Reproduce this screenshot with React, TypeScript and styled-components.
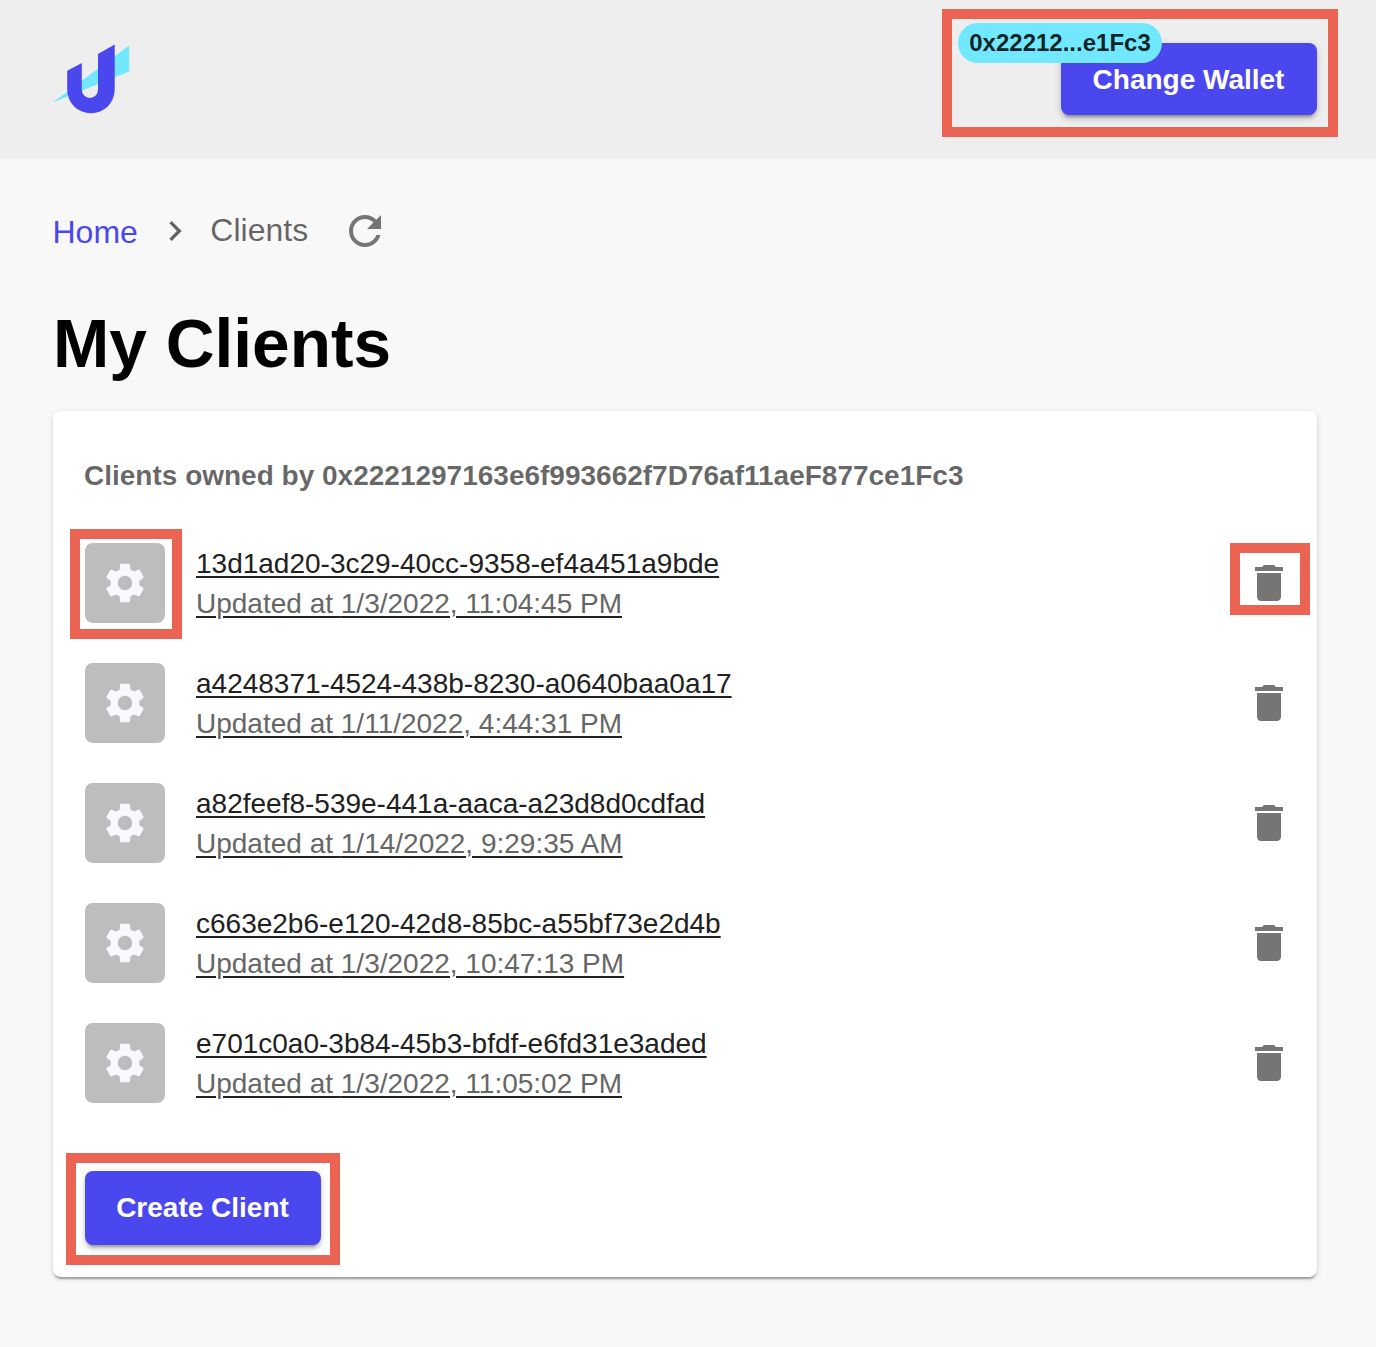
import React from 'react';
import styled, { createGlobalStyle, css } from 'styled-components';

const GlobalStyle = createGlobalStyle`
  *, *::before, *::after { box-sizing: border-box; }
  html, body { margin: 0; padding: 0; background: #f8f8f8; }
  body {
    font-family: Helvetica, "Liberation Sans", Arial, sans-serif;
    color: rgba(0, 0, 0, 0.87);
  }
`;

/* Red annotation frame drawn around a control; offsets are top/right/bottom/left overhang. */
const frame = css<{ $frame?: string }>`
  ${({ $frame }) =>
    $frame &&
    css`
      &::after {
        content: '';
        position: absolute;
        inset: ${$frame};
        border: 10px solid #eb6453;
        pointer-events: none;
      }
    `}
`;

const Page = styled.div`
  min-height: 1347px;
  background: #f8f8f8;
`;

const Header = styled.header`
  display: flex;
  align-items: center;
  justify-content: space-between;
  height: 159px;
  padding: 0 59px 1px 52px;
  background: #eeeeee;
`;

const Logo = styled.svg`
  display: block;
  width: 80px;
  height: 72px;
`;

const Button = styled.button<{
  $height: number;
  $width: number;
  $frame?: string;
  $padding?: string;
}>`
  position: relative;
  display: flex;
  align-items: center;
  justify-content: center;
  width: ${({ $width }) => $width}px;
  height: ${({ $height }) => $height}px;
  padding: ${({ $padding }) => $padding ?? '0 1px 0 0'};
  border: 0;
  border-radius: 8px;
  background: #4b47ee;
  color: #fff;
  font: bold 28px/48px "Liberation Sans", Arial, sans-serif;
  white-space: nowrap;
  box-shadow:
    0 6px 2px -4px rgba(0, 0, 0, 0.2),
    0 4px 4px 0 rgba(0, 0, 0, 0.14),
    0 2px 10px 0 rgba(0, 0, 0, 0.12);
  ${frame}
`;

const Badge = styled.span`
  position: absolute;
  top: -20px;
  right: 155px;
  display: flex;
  align-items: center;
  justify-content: center;
  width: 204px;
  height: 40px;
  border-radius: 20px;
  background: #72e8ff;
  color: rgba(0, 0, 0, 0.87);
  font-size: 24px;
  line-height: 24px;
`;

const Main = styled.main`
  padding: 48px 59px 0 53px;
`;

const Breadcrumbs = styled.nav`
  display: flex;
  align-items: center;
  height: 48px;
  margin-left: -0.5px;
  font-size: 32px;
  line-height: 48px;
`;

const HomeLink = styled.a`
  padding-top: 1px;
  color: #4b47ee;
  text-decoration: none;
`;

const Crumb = styled.span`
  padding-bottom: 2px;
  color: rgba(0, 0, 0, 0.6);
`;

const Icon = styled.svg<{ $size: number }>`
  display: block;
  flex: none;
  width: ${({ $size }) => $size}px;
  height: ${({ $size }) => $size}px;
  fill: currentColor;
`;

const Separator = styled.span`
  margin: 0 15px 0 17.5px;
  color: rgba(0, 0, 0, 0.6);
`;

const IconButton = styled.button<{ $frame?: string }>`
  position: relative;
  flex: none;
  padding: 0;
  border: 0;
  background: none;
  color: #757575;
  ${frame}
`;

const RefreshSlot = styled.div`
  display: flex;
  margin-left: 33px;
`;

const Title = styled.h1`
  margin: 49px 0 27px;
  color: #000;
  font-size: 67.6px;
  line-height: 80px;
  font-weight: bold;
`;

const Card = styled.section`
  height: 866px;
  padding: 32px;
  border-radius: 8px;
  background: #fff;
  box-shadow:
    0 4px 2px -2px rgba(0, 0, 0, 0.2),
    0 2px 2px 0 rgba(0, 0, 0, 0.14),
    0 2px 6px 0 rgba(0, 0, 0, 0.12);
`;

const Owner = styled.h2`
  margin: 0 0 0 -1px;
  height: 80px;
  color: rgba(0, 0, 0, 0.6);
  font-size: 28px;
  line-height: 66px;
  font-weight: bold;
  white-space: nowrap;
`;

const List = styled.ul`
  margin: 0 -8px 48px 0;
  padding: 0;
  list-style: none;
`;

const Row = styled.li`
  display: flex;
  align-items: center;
  height: 120px;
`;

const Avatar = styled.div<{ $frame?: string }>`
  position: relative;
  display: flex;
  align-items: center;
  justify-content: center;
  flex: none;
  width: 80px;
  height: 80px;
  border-radius: 8px;
  background: #bdbdbd;
  color: #f8f8ff;
  ${frame}
`;

const Details = styled.a`
  display: flex;
  flex-direction: column;
  align-items: flex-start;
  flex: 1;
  margin-left: 31px;
  padding-top: 2px;
  color: #212121;
  font-size: 28px;
  line-height: 40px;
`;

const Underlined = styled.span`
  text-decoration: underline;
  text-decoration-color: #212121;
  text-decoration-thickness: 2px;
  text-underline-offset: 3px;
`;

const Muted = styled(Underlined)`
  color: #666;
`;

const paths = {
  next: 'M10 6L8.59 7.41 13.17 12l-4.58 4.59L10 18l6-6z',
  refresh:
    'M17.65 6.35C16.2 4.9 14.21 4 12 4c-4.42 0-7.99 3.58-7.99 8s3.57 8 7.99 8c3.73 0 6.84-2.55 7.73-6h-2.08c-.82 2.33-3.04 4-5.65 4-3.31 0-6-2.69-6-6s2.69-6 6-6c1.66 0 3.14.69 4.22 1.78L13 11h7V4l-2.35 2.35z',
  settings:
    'M19.14 12.94c.04-.3.06-.61.06-.94 0-.32-.02-.64-.07-.94l2.03-1.58c.18-.14.23-.41.12-.61l-1.92-3.32c-.12-.22-.37-.29-.59-.22l-2.39.96c-.5-.38-1.03-.7-1.62-.94l-.36-2.54c-.04-.24-.24-.41-.48-.41h-3.84c-.24 0-.43.17-.47.41l-.36 2.54c-.59.24-1.13.57-1.62.94l-2.39-.96c-.22-.08-.47 0-.59.22L2.74 8.87c-.12.21-.08.47.12.61l2.03 1.58c-.05.3-.09.63-.09.94s.02.64.07.94l-2.03 1.58c-.18.14-.23.41-.12.61l1.92 3.32c.12.22.37.29.59.22l2.39-.96c.5.38 1.03.7 1.62.94l.36 2.54c.05.24.24.41.48.41h3.84c.24 0 .44-.17.47-.41l.36-2.54c.59-.24 1.13-.56 1.62-.94l2.39.96c.22.08.47 0 .59-.22l1.92-3.32c.12-.22.07-.47-.12-.61l-2.01-1.58zM12 15.6c-1.98 0-3.6-1.62-3.6-3.6s1.62-3.6 3.6-3.6 3.6 1.62 3.6 3.6-1.62 3.6-3.6 3.6z',
  trash: 'M6 19c0 1.1.9 2 2 2h8c1.1 0 2-.9 2-2V7H6v12zM19 4h-3.5l-1-1h-5l-1 1H5v2h14V4z',
};

function Glyph({ name, size = 48 }: { name: keyof typeof paths; size?: number }) {
  return (
    <Icon viewBox="0 0 24 24" $size={size} aria-hidden>
      <path d={paths[name]} />
    </Icon>
  );
}

const clients = [
  { id: '13d1ad20-3c29-40cc-9358-ef4a451a9bde', updated: '1/3/2022, 11:04:45 PM' },
  { id: 'a4248371-4524-438b-8230-a0640baa0a17', updated: '1/11/2022, 4:44:31 PM' },
  { id: 'a82feef8-539e-441a-aaca-a23d8d0cdfad', updated: '1/14/2022, 9:29:35 AM' },
  { id: 'c663e2b6-e120-42d8-85bc-a55bf73e2d4b', updated: '1/3/2022, 10:47:13 PM' },
  { id: 'e701c0a0-3b84-45b3-bfdf-e6fd31e3aded', updated: '1/3/2022, 11:05:02 PM' },
];

export default function App() {
  return (
    <Page>
      <GlobalStyle />
      <Header>
        <Logo viewBox="52 43 80 72" aria-label="Logo">
          <path d="M52.7 102.4 129.1 45.6V71.6Z" fill="#72e8ff" />
          <path
            d="M67.2 70.8 81.8 63V89.8a8.1 8.1 0 0 0 16.2 0V54L114.7 44.4V89.6a23.75 23.75 0 0 1-47.5 0Z"
            fill="#4b47ee"
          />
        </Logo>
        <Button $width={256} $height={72} $padding="2px 1px 0 0" $frame="-34px -21px -22px -119px">
          Change Wallet
          <Badge>0x22212...e1Fc3</Badge>
        </Button>
      </Header>
      <Main>
        <Breadcrumbs>
          <HomeLink>Home</HomeLink>
          <Separator>
            <Glyph name="next" size={40} />
          </Separator>
          <Crumb>Clients</Crumb>
          <RefreshSlot>
            <IconButton aria-label="Refresh">
              <Glyph name="refresh" />
            </IconButton>
          </RefreshSlot>
        </Breadcrumbs>
        <Title>My Clients</Title>
        <Card>
          <Owner>Clients owned by 0x2221297163e6f993662f7D76af11aeF877ce1Fc3</Owner>
          <List>
            {clients.map((client, i) => (
              <Row key={client.id}>
                <Avatar $frame={i === 0 ? '-14px -17px -16px -15px' : undefined}>
                  <Glyph name="settings" />
                </Avatar>
                <Details>
                  <Underlined>{client.id}</Underlined>
                  <Muted>Updated at {client.updated}</Muted>
                </Details>
                <IconButton
                  aria-label="Delete"
                  $frame={i === 0 ? '-16px -17px -8px -15px' : undefined}
                >
                  <Glyph name="trash" />
                </IconButton>
              </Row>
            ))}
          </List>
          <Button $width={236} $height={74} $frame="-18px -19px -20px -19px">
            Create Client
          </Button>
        </Card>
      </Main>
    </Page>
  );
}
